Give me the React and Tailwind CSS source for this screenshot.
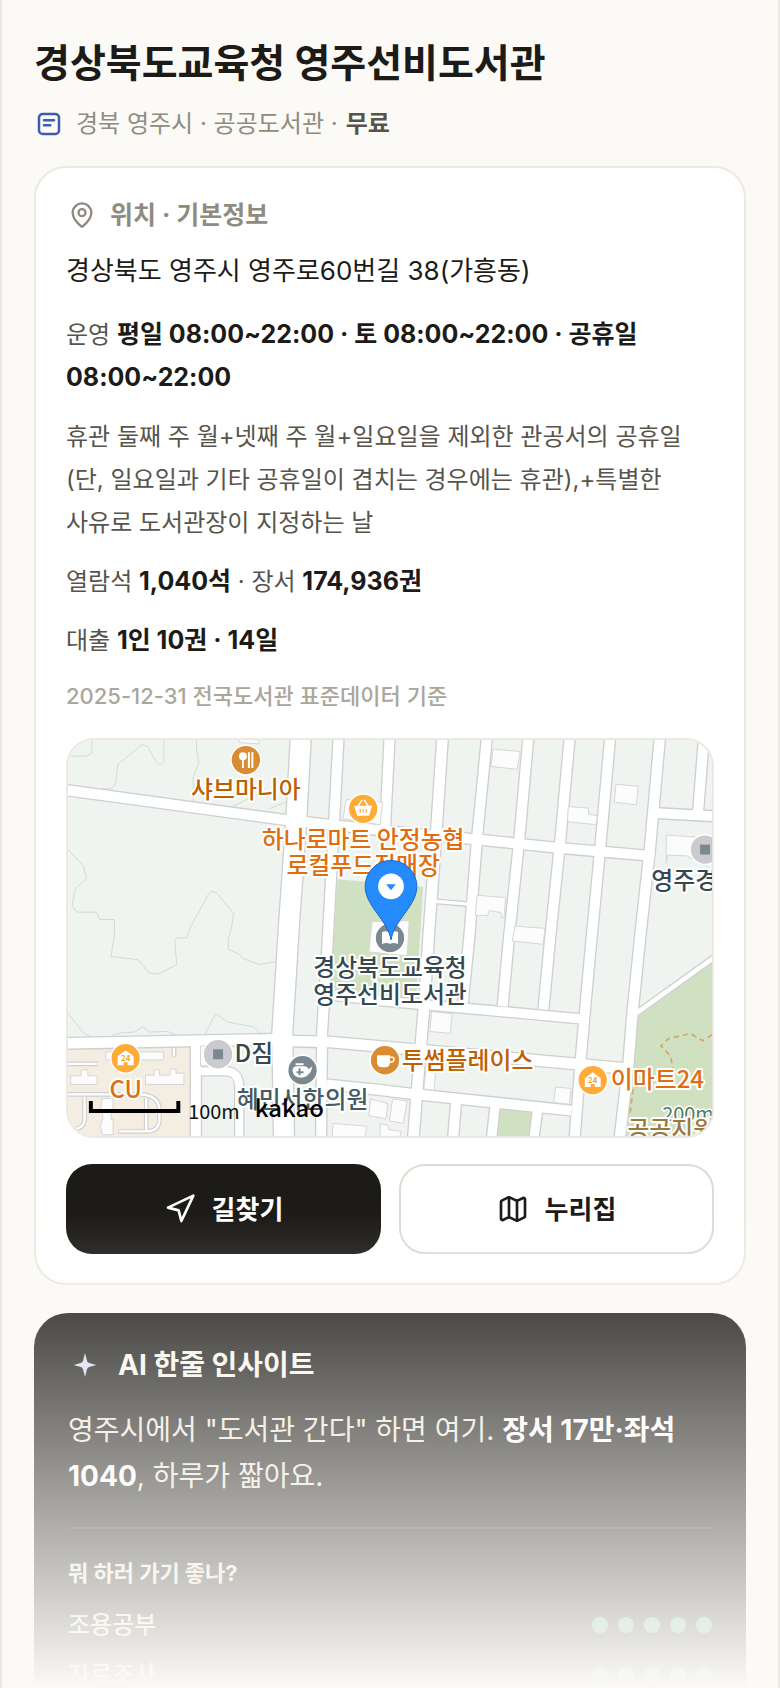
import React from 'react';
import { MapPin, Navigation, Map as MapIcon } from 'lucide-react';

const SCORES = [
  { label: '조용공부', value: 5 },
  { label: '자료조사', value: 5 },
];

// roads are [width, path], drawn once as a grey casing and once as a white fill
const ROADS = [
  [30, 'M-10 153 L652 243 L952 276 L1219 301 L1482 328 L1770 353'],
  [60, 'M703 -10 L689 246 L666 576 L647 886 L652 1210'],
  [30, 'M817 -10 L784 606 L767 886 L764 1210'],
  [30, 'M971 -10 L957 270'],
  [32, 'M1131 -10 L1112 276 L1089 590 L1075 806 L1055 1046 L1042 1210'],
  [30, 'M1265 -10 L1235 296 L1212 590 L1192 796'],
  [30, 'M1390 -10 L1361 316 L1332 590 L1312 806'],
  [30, 'M1515 -10 L1484 326 L1455 606 L1435 816'],
  [30, 'M1637 -10 L1605 346 L1580 606 L1559 836 L1547 976 L1529 1210'],
  [31, 'M1787 -10 L1757 326 L1728 590 L1704 826 L1692 976 L1665 1210'],
  [30, 'M1920 -10 L1902 220'],
  [30, 'M1775 223 L1960 233'],
  [28, 'M782 771 L942 789 L1092 803 L1312 822 L1555 845'],
  [32, 'M-10 918 L612 906 L680 911 L790 914 L972 930 L1532 980 L1692 995'],
  [30, 'M780 1042 L942 1059 L1042 1071 L1520 1121'],
  [10, 'M1105 489 L1212 498'],
  [30, 'M1172 1090 L1162 1210'],
  [28, 'M1290 1100 L1278 1210'],
  [28, 'M1418 1115 L1406 1210'],
  [14, 'M1717 826 L1960 652'],
  [30, 'M386 925 L386 1210'],
  [24, 'M390 1002 L478 1002 Q517 1004 517 1050 L517 1210'],
];

const CONTOURS = [
  'M72 0 V42 L56 51 H8 L0 48',
  'M102 149 H132 L144 134 L150 76 L224 16 L240 22 L270 74 Q282 80 289 68 V0',
  'M388 0 V30 L395 72 L378 114 V190',
  'M490 206 L540 182 L590 160 M608 210 L660 188',
  'M0 332 L46 382 L56 420 L22 452 L12 505 L28 522 H86 L96 544 H140 V590 L130 656 L210 665 L244 704 Q260 714 280 706 L328 680 L322 608 L328 600 H358 L370 566 L424 468 Q432 452 450 466 L500 525 L494 568 L484 604 V634 L516 648 L528 662 L578 680 L626 672',
  'M0 826 L46 886 L74 900 M134 893 L162 886 L202 884 L224 868 L246 884 L300 882 L328 894',
  'M414 890 L446 828 L482 854 L560 868 L580 887',
];

const BUILDINGS = [
  'M1283 30 L1365 37 L1356 91 L1277 82 Z',
  'M1654 136 L1721 142 L1716 198 L1649 190 Z',
  'M1510 203 L1571 208 V226 L1598 231 L1594 258 L1508 249 Z',
  'M1235 471 L1321 478 L1316 538 H1309 L1307 523 L1272 517 L1266 533 L1230 531 Z',
  'M1349 564 L1440 571 L1434 619 L1341 609 Z',
  'M1806 289 L1944 299 V390 L1868 352 L1810 350 L1806 374 Z',
  'M840 182 L950 190 L942 258 L830 240 Z',
  'M918 550 L1030 548 L1024 654 L908 642 Z',
  'M1098 822 L1160 829 L1154 888 L1092 882 Z',
  'M1080 1002 L1110 1008 L1105 1060 L1074 1056 Z',
  'M1472 1050 L1518 1054 L1514 1102 L1466 1096 Z',
  'M980 1086 L1024 1092 L1012 1160 L970 1152 Z',
  'M942 1160 L966 1166 L968 1178 L1006 1184 L1002 1200 H942 Z',
  'M914 1086 L966 1100 L960 1146 L908 1136 Z',
  'M800 1160 L902 1168 L896 1200 H798 Z',
  'M400 926 H450 V986 H400 Z',
  'M114 944 H288 V968 H114 Z',
  'M518 0 L576 2 V14 L518 10 Z',
];

const BEIGE_BUILDINGS = [
  'M8 1016 H40 V998 H60 V1016 H88 V1042 H8 Z',
  'M234 1042 V1014 H260 V998 H276 V1014 H308 V996 H326 V1008 H350 V1042 Z',
  'M104 1084 H136 V1116 H130 V1148 H136 V1194 H104 L98 1170 L106 1140 L98 1116 Z',
];

const LABELS = [
  { x: 179, y: 59, text: '샤브마니아', color: '#bf6000' },
  { x: 297, y: 109, text: '하나로마트 안정농협', color: '#e06e10' },
  { x: 297, y: 136, text: '로컬푸드직매장', color: '#e06e10' },
  { x: 324, y: 238, text: '경상북도교육청', color: '#37474f' },
  { x: 324, y: 265, text: '영주선비도서관', color: '#37474f' },
  { x: 187, y: 325, text: 'D짐', color: '#37474f' },
  { x: 236, y: 371, text: '혜민서한의원', color: '#455a64' },
  { x: 58, y: 361, text: 'CU', color: '#e06e10' },
  { x: 402, y: 332, text: '투썸플레이스', color: '#bf6000' },
  { x: 593, y: 351, text: '이마트24', color: '#e06e10' },
  { x: 620, y: 151, text: '영주경', color: '#37474f' },
  { x: 607, y: 401, text: '공공지원', color: '#9a7a3c' },
];

function Marker({ x, y, color, children }) {
  return (
    <g transform={`translate(${x} ${y})`}>
      <circle r="15" fill={color} stroke="#fff" strokeWidth="1.5" />
      {children}
    </g>
  );
}

function StoreMark() {
  return (
    <>
      <path d="M-8 7 V-2 L0 -8 L8 -2 V7 H2 V4 H-2 V7 Z" fill="#fff" />
      <text y="3" textAnchor="middle" fontSize="8" fontWeight="700" fill="#f5a32c">24</text>
    </>
  );
}

function KakaoMap() {
  return (
    <svg
      viewBox="0 0 648 400"
      preserveAspectRatio="xMidYMid slice"
      className="block h-full w-full font-['Noto_Sans_CJK_KR',sans-serif]"
      role="img"
      aria-label="경상북도교육청 영주선비도서관 지도"
    >
      <rect width="648" height="400" fill="#eff4f1" />
      <g transform="scale(0.33333)" fill="none">
        <path d="M814 423 L1072 446 L1050 795 L790 770 Z" fill="#d0e1c1" />
        <path d="M1299 1105 L1400 1118 L1396 1200 H1288 Z" fill="#d0e1c1" />
        <path d="M1717 838 L1944 672 V1200 H1680 Z" fill="#d0e1c1" />
        <path d="M0 925 H380 V1200 H0 Z" fill="#f4ede2" />
        {CONTOURS.map((d) => <path key={d} d={d} stroke="#d3d9d5" strokeWidth="3" />)}

        <g stroke="#cfcfcf" strokeWidth="14">
          <path d="M0 980 H90 M0 1072 H220 Q276 1076 276 1120 V1150 Q274 1182 240 1184 H152 M50 1080 V1150 Q48 1172 24 1176 M236 1084 V1180 M320 930 V960" />
        </g>
        <g stroke="#fff" strokeWidth="7">
          <path d="M0 980 H88 M0 1072 H220 Q276 1076 276 1120 V1150 Q274 1182 240 1184 H154 M50 1080 V1150 Q48 1172 24 1176 M236 1084 V1180 M320 930 V958" />
        </g>

        {ROADS.map(([w, d]) => <path key={d} d={d} stroke="#cfcfcf" strokeWidth={w + 8} strokeLinejoin="round" />)}
        {ROADS.map(([w, d]) => <path key={d} d={d} stroke="#fff" strokeWidth={w} strokeLinejoin="round" />)}

        {[...BUILDINGS, ...BEIGE_BUILDINGS].map((d) => (
          <path key={d} d={d} fill="#fcfcfc" stroke="#d6d6d6" strokeWidth="3" />
        ))}
        <path
          d="M1944 892 L1916 910 L1878 888 L1812 904 L1790 926 L1820 958 L1826 1000 M1706 1056 L1696 1136"
          stroke="#d3a567"
          strokeWidth="5"
          strokeDasharray="16 12"
        />
      </g>

      <Marker x={179} y={21} color="#d98c33">
        <circle cx="-3" cy="-4" r="4" fill="#fff" />
        <path d="M-3 0 V8 M3 -8 V8 M6.5 -8 V8" stroke="#fff" strokeWidth="2" />
      </Marker>
      <Marker x={297} y={70} color="#ffab38">
        <path d="M-9 -3 H9 L6 7 H-6 Z" fill="#fff" />
        <path d="M-5 -3 L-1 -9 M5 -3 L1 -9" stroke="#fff" strokeWidth="1.5" />
        <path d="M-3 0 V4 M0 0 V4 M3 0 V4" stroke="#ffab38" strokeWidth="1.2" />
      </Marker>
      <Marker x={58} y={321} color="#ffab38"><StoreMark /></Marker>
      <Marker x={528} y={343} color="#ffab38"><StoreMark /></Marker>
      <Marker x={151} y={317} color="#cacacf">
        <rect x="-5" y="-5" width="10" height="10" fill="#7b888f" />
      </Marker>
      <Marker x={641} y={111} color="#cacacf">
        <rect x="-5" y="-5" width="10" height="10" fill="#7b888f" />
      </Marker>
      <Marker x={236} y={333} color="#7b888f">
        <path d="M-10 0 Q-10 -4 -5 -4 H2 Q5 -4 6 -1 L10 -4 L8 2 L4 6 Q-2 9 -7 6 Q-10 4 -10 0 Z M-7 -7 H1 V-5 H-7 Z" fill="#fff" />
        <path d="M-3 -2 V5 M-6 2 H1" stroke="#7b888f" strokeWidth="2" />
      </Marker>
      <Marker x={319} y={323} color="#d98c33">
        <path d="M-8 -5 H5 V2 Q5 7 0 7 H-3 Q-8 7 -8 2 Z" fill="#fff" />
        <path d="M5 -3 H7 Q9 -3 9 -1 Q9 2 5 2" fill="none" stroke="#fff" strokeWidth="1.5" />
      </Marker>
      <Marker x={324} y={200} color="#7b888f">
        <path d="M-8 -6 Q-3 -8 0 -5 Q3 -8 8 -6 V6 Q3 4 0 6 Q-3 4 -8 6 Z" fill="#fff" />
      </Marker>

      <text x="598" y="384" fontSize="20" fill="#4f7a5c" stroke="#fff" strokeWidth="3" paintOrder="stroke">200m</text>
      {LABELS.map((l) => (
        <text
          key={l.text}
          x={l.x}
          y={l.y}
          fill={l.color}
          textAnchor="middle"
          fontSize="24"
          fontWeight="500"
          stroke="#fff"
          strokeWidth="4"
          strokeLinejoin="round"
          paintOrder="stroke"
        >
          {l.text}
        </text>
      ))}

      <path d="M325 202 C322 182 299 168 299 148 A26 26 0 0 1 351 148 C351 168 328 182 325 202 Z" fill="#258bfd" stroke="#1766c9" />
      <circle cx="325" cy="148" r="13" fill="#fff" />
      <path d="M320 146 H330 L325 152 Z" fill="#258bfd" />

      <path d="M23 364 V374 H111 V364" fill="none" stroke="#000" strokeWidth="4" />
      <text x="121" y="382" fontSize="20" fill="#111">100m</text>
      <text x="188" y="380" fontSize="24" fontWeight="500" fill="#000">kakao</text>
    </svg>
  );
}

function Strong({ children }) {
  return <strong className="text-[25px] font-bold text-[#1c1b17]">{children}</strong>;
}

export default function App() {
  return (
    <div className="relative h-screen overflow-hidden border-x-2 border-[#ebe9e1] bg-[#fbfaf6] px-8 pt-10 font-['Inter','Noto_Sans_CJK_KR',sans-serif] text-[#1c1b17]">
      <header>
        <h1 className="text-[39px] leading-[46px] font-bold">경상북도교육청 영주선비도서관</h1>
        <div className="mt-5 flex items-center text-2xl leading-9 text-[#8f8b7f]">
          <svg width="30" height="30" viewBox="0 0 24 24" fill="none" stroke="#3f5bb0" strokeWidth="2" strokeLinecap="round" strokeLinejoin="round" className="mr-3">
            <rect x="4" y="4" width="16" height="16" rx="3" />
            <path d="M8 9h8M8 13h5" />
          </svg>
          <span>경북 영주시 · 공공도서관 ·</span>
          <span className="ml-2 font-bold text-[#57544b]">무료</span>
        </div>
      </header>

      <main className="mt-6">
        <section className="rounded-[32px] border-2 border-[#ebe9e1] bg-white px-[30px] pt-[29px] pb-[29px]">
          <h2 className="flex items-center gap-[14px] text-[25px] leading-9 font-bold text-[#8f8b7f]">
            <MapPin size={28} strokeWidth={2} className="ml-0.5" />
            위치 · 기본정보
          </h2>
          <p className="mt-5 text-[26px] leading-9">경상북도 영주시 영주로60번길 38(가흥동)</p>

          <div className="mt-6 flex flex-col gap-4 text-2xl leading-[43px] text-[#57544b]">
            <p>운영 <Strong>평일 08:00~22:00 · 토 08:00~22:00 · 공휴일 08:00~22:00</Strong></p>
            <p className="break-keep">
              휴관 둘째 주 월+넷째 주 월+일요일을 제외한 관공서의 공휴일(단, 일요일과 기타 공휴일이 겹치는 경우에는 휴관),+특별한 사유로 도서관장이 지정하는 날
            </p>
            <p>열람석 <Strong>1,040석</Strong> · 장서 <Strong>174,936권</Strong></p>
            <p>대출 <Strong>1인 10권 · 14일</Strong></p>
            <p className="text-[22px] leading-9 font-medium text-[#aaa69a]">2025-12-31 전국도서관 표준데이터 기준</p>
          </div>

          <div className="mt-6 h-[400px] overflow-hidden rounded-[28px] border-2 border-[#ebe9e1]">
            <KakaoMap />
          </div>

          <div className="mt-[26px] grid grid-cols-2 gap-[18px] text-[26px] font-bold">
            <button className="flex h-[90px] items-center justify-center gap-4 rounded-[26px] bg-[#1c1b17] text-white">
              <Navigation size={32} strokeWidth={2} />
              길찾기
            </button>
            <button className="flex h-[90px] items-center justify-center gap-4 rounded-[26px] border-2 border-[#dedcd2] bg-white">
              <MapIcon size={32} strokeWidth={2} />
              누리집
            </button>
          </div>
        </section>

        <section className="mt-7 rounded-t-[34px] bg-[#1c1b17] px-[34px] pt-8 pb-10 text-[#ece9df]">
          <h2 className="flex items-center gap-4 text-[28px] leading-10 font-bold text-[#f8f6ef]">
            <svg width="34" height="34" viewBox="0 0 24 24" fill="#d5dcf5">
              <path d="M12 3.5 L13.4 9 Q13.8 10.2 15 10.6 L20 12 L15 13.4 Q13.8 13.8 13.4 15 L12 20.5 L10.6 15 Q10.2 13.8 9 13.4 L4 12 L9 10.6 Q10.2 10.2 10.6 9 Z" />
            </svg>
            AI 한줄 인사이트
          </h2>
          <p className="mt-[22px] text-[28px] leading-[46px] break-keep">
            영주시에서 "도서관 간다" 하면 여기. <strong className="font-bold text-white">장서 17만·좌석 1040</strong>, 하루가 짧아요.
          </p>
          <hr className="mt-7 border-t-2 border-white/10" />
          <h3 className="mt-7 text-[22px] leading-8 font-bold">뭐 하러 가기 좋나?</h3>
          <ul className="mt-[18px] flex flex-col gap-[14px]">
            {SCORES.map((s) => (
              <li key={s.label} className="flex items-center justify-between text-2xl leading-9 font-medium">
                <span>{s.label}</span>
                <span className="flex gap-[10px]" role="img" aria-label={`${s.value}점`}>
                  {Array.from({ length: s.value }, (_, i) => (
                    <span key={i} className="size-4 rounded-full bg-[#52a882]" />
                  ))}
                </span>
              </li>
            ))}
          </ul>
        </section>
      </main>

      {/* fades the rest of the page out */}
      <div className="pointer-events-none absolute inset-x-0 bottom-0 h-[474px] bg-linear-to-b from-[#fbfaf6]/0 to-[#fbfaf6]" />
    </div>
  );
}
